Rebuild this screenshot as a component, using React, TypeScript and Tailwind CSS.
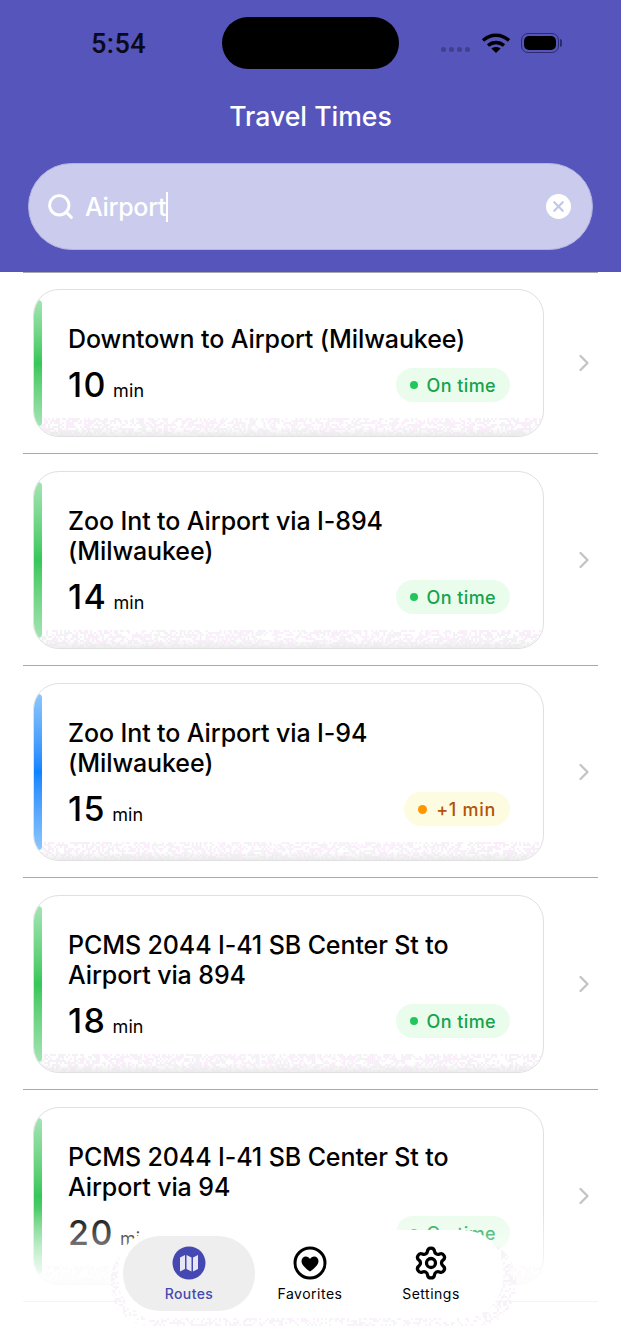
import { Settings, Search, ChevronRight, X } from "lucide-react";

const routes = [
  { title: ["Downtown to Airport (Milwaukee)"], mins: 10, status: "ok" },
  { title: ["Zoo Int to Airport via I-894", "(Milwaukee)"], mins: 14, status: "ok" },
  { title: ["Zoo Int to Airport via I-94", "(Milwaukee)"], mins: 15, status: "late" },
  { title: ["PCMS 2044 I-41 SB Center St to", "Airport via 894"], mins: 18, status: "ok" },
  { title: ["PCMS 2044 I-41 SB Center St to", "Airport via 94"], mins: 20, status: "ok" },
];

// speckled blur that shows under glass edges
const Speckle = ({ width, height, seed, density }: { width: number; height: number; seed: number; density: number }) => {
  const dots = [];
  let n = seed * 7919 + 13;
  for (let y = 0; y < height; y += 2) {
    for (let x = 0; x < width; x += 2) {
      n = (n * 1103515245 + 12345) & 0x7fffffff;
      if ((n >> 8) % 100 < density) {
        const pink = (n >> 16) % 2 === 0;
        dots.push(<rect key={`${x}-${y}`} x={x} y={y} width="2" height="2" fill={pink ? "#fbedfb" : "#f2f2f4"} />);
      }
    }
  }
  return (
    <svg width={width} height={height} className="block w-full h-full" preserveAspectRatio="none" viewBox={`0 0 ${width} ${height}`}>
      {dots}
    </svg>
  );
};

const RouteCard = ({ route, index }: { route: (typeof routes)[number]; index: number }) => {
  const late = route.status === "late";
  return (
    <div className="mx-[23px] border-b border-[#a9a9a9] pt-[17px] pb-[16px] flex items-center">
      <div className="relative shrink-0 ml-[10px] w-[511px] rounded-[26px] border border-[#e0e0e0] bg-white overflow-hidden pl-[34px] pr-[33px] py-[34px]">
        <div className="absolute left-0 right-0 bottom-0 h-[18px]">
          <Speckle width={510} height={18} seed={index + 1} density={55} />
        </div>
        <div className="absolute left-0 right-0 bottom-0 h-[8px] bg-gradient-to-b from-[#eeeeee]/0 to-[#e8e8e8]/80" />
        <div
          className={
            late
              ? "absolute left-0 top-[10px] bottom-[10px] w-[8px] rounded-full bg-gradient-to-b from-[#8cc6fb] via-[#0a84ff] to-[#8cc6fb]"
              : "absolute left-0 top-[10px] bottom-[10px] w-[8px] rounded-full bg-gradient-to-b from-[#a2e4b4] via-[#34c759] to-[#a2e4b4]"
          }
        />
        <div className="relative text-[25px] leading-[30px] font-medium text-black tracking-[-0.1px]">
          {route.title.map((line) => (
            <div key={line}>{line}</div>
          ))}
        </div>
        <div className="relative mt-[14px] flex items-center justify-between">
          <div className="flex items-baseline gap-[6px] text-black">
            <span className="text-[34px] leading-[34px] font-medium tracking-[1.5px]">{route.mins}</span>
            <span className="text-[18px] leading-[20px] font-normal tracking-[0.1px]">min</span>
          </div>
          <div
            className={
              late
                ? "h-[34px] rounded-full bg-[#fefce0] pl-[14px] pr-[14px] flex items-center gap-[9px] text-[18px] font-medium tracking-[0.7px] text-[#b45309]"
                : "h-[34px] rounded-full bg-[#eafcec] pl-[14px] pr-[14px] flex items-center gap-[9px] text-[18px] font-medium tracking-[0.4px] text-[#16a34a]"
            }
          >
            <span className={late ? "w-[9px] h-[9px] rounded-full bg-[#ff9500]" : "w-[8px] h-[8px] rounded-full bg-[#22c55e]"} />
            {late ? "+1 min" : "On time"}
          </div>
        </div>
      </div>
      <ChevronRight className="shrink-0 ml-[26px] text-[#c4c4c6]" size={28} strokeWidth={2} />
    </div>
  );
};

const MapIcon = () => (
  <svg width="34" height="34" viewBox="0 0 34 34">
    <circle cx="17" cy="17" r="16.5" fill="#4448b0" />
    <path d="M8 11.5l5-2.5v14l-5 2.5zM14.5 9l5 2.5v14l-5-2.5zM21 11.5l5-2.5v14l-5 2.5z" fill="#e6e6f5" />
  </svg>
);

const HeartIcon = () => (
  <svg width="34" height="34" viewBox="0 0 34 34">
    <circle cx="17" cy="17" r="15" fill="none" stroke="#000" strokeWidth="3" />
    <path d="M17 25.5c-5-3.8-8.5-6.8-8.5-10.6 0-2.5 2-4.4 4.4-4.4 1.7 0 3.2.9 4.1 2.4.9-1.5 2.4-2.4 4.1-2.4 2.4 0 4.4 1.9 4.4 4.4 0 3.8-3.5 6.8-8.5 10.6z" fill="#000" />
  </svg>
);

export default function App() {
  return (
    <div className="relative w-[621px] h-[1344px] overflow-hidden bg-white font-['Inter',sans-serif]">
      <header className="h-[272px] bg-[#5555bb] flex flex-col">
        <div className="relative h-[88px] shrink-0">
          <span className="absolute left-[91px] top-[27px] text-[27px] leading-[34px] font-medium text-[#0a0a1a] font-['Roboto',sans-serif] tracking-[0.5px]">
            5:54
          </span>
          <div className="absolute left-[222px] top-[17px] w-[177px] h-[52px] rounded-full bg-black" />
          <div className="absolute left-[441px] top-[47px] flex gap-[3px]">
            <span className="w-[5px] h-[5px] rounded-full bg-[#40408f]" />
            <span className="w-[5px] h-[5px] rounded-full bg-[#40408f]" />
            <span className="w-[5px] h-[5px] rounded-full bg-[#40408f]" />
            <span className="w-[5px] h-[5px] rounded-full bg-[#40408f]" />
          </div>
          <svg className="absolute left-[481px] top-[32px]" width="30" height="22" viewBox="0 0 30 22" fill="none" stroke="#000" strokeWidth="3.4">
            <path d="M2 8.5C9.5 1.5 20.5 1.5 28 8.5" />
            <path d="M7 13.5C11.8 9.5 18.2 9.5 23 13.5" />
            <path d="M15 21l-4.6-4.6c2.7-2 6.5-2 9.2 0z" fill="#000" stroke="none" />
          </svg>
          <div className="absolute left-[521px] top-[33px] w-[38px] h-[20px] rounded-[7px] border border-[#2b2b70] p-[2px]">
            <div className="w-full h-full rounded-[5px] bg-black" />
          </div>
          <div className="absolute left-[560px] top-[39px] w-[2px] h-[8px] rounded-r-full bg-[#2b2b70]" />
        </div>
        <h1 className="mt-[11px] text-center text-[26.6px] leading-[34px] font-medium text-white">Travel Times</h1>
        <div className="mx-[28px] mt-[30px] h-[87px] rounded-full bg-[#cbcbed] border border-[#b3b3df] flex items-center pl-[17px] pr-[21px]">
          <Search className="text-white" size={29} strokeWidth={2.4} />
          <span className="ml-[10px] text-[25px] leading-[30px] font-medium tracking-[-0.3px] text-white">Airport</span>
          <span className="w-[2px] h-[30px] bg-white" />
          <div className="ml-auto w-[25px] h-[25px] rounded-full bg-white flex items-center justify-center">
            <X className="text-[#c0c6ea]" size={17} strokeWidth={3} />
          </div>
        </div>
      </header>

      <main className="flex flex-col">
        <div className="mx-[23px] border-b border-[#a9a9a9] -mb-px" />
        {routes.map((route, i) => (
          <RouteCard key={route.mins} route={route} index={i} />
        ))}
      </main>

      {/* content fades out behind the floating tab bar */}
      <div className="absolute left-0 right-0 bottom-0 h-[135px] bg-gradient-to-b from-white/0 via-white/85 to-white/90" />

      <nav className="absolute left-[111px] top-[1228px] w-[405px] h-[98px]">
        <div className="absolute inset-x-0 bottom-0 top-[12px] opacity-70 rounded-[40px] overflow-hidden">
          <Speckle width={405} height={86} seed={9} density={40} />
        </div>
        <div className="absolute left-[7px] right-[13px] top-[2px] bottom-[8px] rounded-[40px] bg-white" />
        <div className="relative h-full pl-[12px] pt-[8px] flex">
          <div className="w-[132px] h-[75px] rounded-[37px] bg-[#eeeeef] flex flex-col items-center pt-[10px] text-[#4448b0]">
            <MapIcon />
            <span className="mt-[5px] text-[14px] leading-[18px] font-medium tracking-[0.4px]">Routes</span>
          </div>
          <div className="w-[110px] h-[75px] flex flex-col items-center pt-[10px] text-black">
            <HeartIcon />
            <span className="mt-[5px] text-[14px] leading-[18px] font-normal tracking-[0.5px]">Favorites</span>
          </div>
          <div className="w-[132px] h-[75px] flex flex-col items-center pt-[10px] text-black">
            <Settings size={36} strokeWidth={2.2} className="-mt-[1px] -mb-[1px]" />
            <span className="mt-[5px] text-[14px] leading-[18px] font-normal tracking-[0.5px]">Settings</span>
          </div>
        </div>
      </nav>
    </div>
  );
}
